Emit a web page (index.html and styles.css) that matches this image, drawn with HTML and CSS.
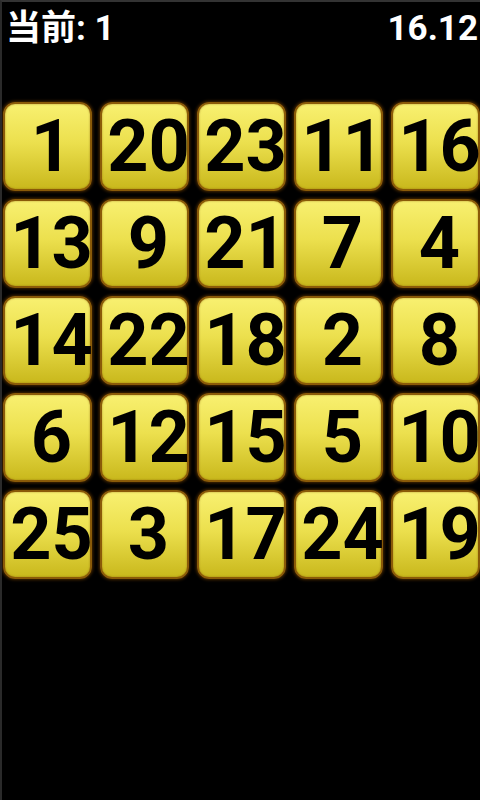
FILE: index.html
```html
<!DOCTYPE html>
<html>
<head>
<meta charset="utf-8">
<link rel="stylesheet" href="styles.css">
</head>
<body>
<div class="screen">
  <div class="header">
    <span class="current">当前: 1</span>
    <span class="timer">16.12</span>
  </div>
  <div class="grid">
    <div class="tile">1</div><div class="tile">20</div><div class="tile">23</div><div class="tile">11</div><div class="tile">16</div>
    <div class="tile">13</div><div class="tile">9</div><div class="tile">21</div><div class="tile">7</div><div class="tile">4</div>
    <div class="tile">14</div><div class="tile">22</div><div class="tile">18</div><div class="tile">2</div><div class="tile">8</div>
    <div class="tile">6</div><div class="tile">12</div><div class="tile">15</div><div class="tile">5</div><div class="tile">10</div>
    <div class="tile">25</div><div class="tile">3</div><div class="tile">17</div><div class="tile">24</div><div class="tile">19</div>
  </div>
</div>
</body>
</html>
```
FILE: styles.css
```css
html, body {
  margin: 0;
  padding: 0;
  background: #000;
}
.screen {
  width: 480px;
  height: 800px;
  box-sizing: border-box;
  border-top: 2px solid #333;
  border-left: 2px solid #2a2a2a;
  background: #000;
  overflow: hidden;
  font-family: Roboto, "Noto Sans CJK SC", sans-serif;
}
.header {
  height: 100px;
  box-sizing: border-box;
  padding: 5px 2px 0 4px;
  display: flex;
  justify-content: space-between;
  align-items: flex-start;
  color: #fff;
  font-weight: bold;
  font-size: 35px;
  line-height: 44px;
}
.grid {
  display: grid;
  grid-template-columns: repeat(5, 89px);
  grid-auto-rows: 89px;
  gap: 8px;
  padding-left: 1px;
}
.tile {
  box-sizing: border-box;
  border: 2px solid #8a5a08;
  border-radius: 12px;
  background: linear-gradient(to bottom, #f8f070 0%, #ece04e 45%, #c9b81c 100%);
  box-shadow: 0 0 3px 1px rgba(90, 50, 0, 0.8), inset 0 0 2px rgba(120, 80, 0, 0.6);
  display: flex;
  align-items: center;
  justify-content: center;
  padding-left: 8px;
  color: #000;
  font-weight: bold;
  font-size: 72px;
  line-height: 1;
  white-space: nowrap;
  overflow: visible;
}
```
